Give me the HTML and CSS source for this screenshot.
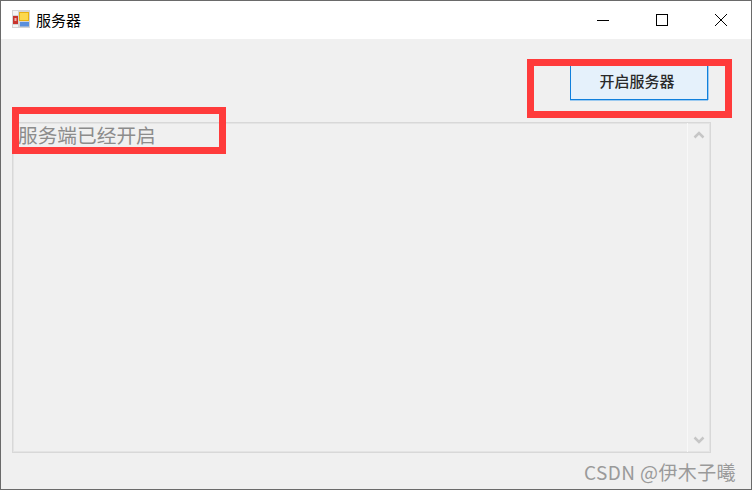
FILE: index.html
```html
<!DOCTYPE html>
<html lang="zh">
<head>
<meta charset="utf-8">
<title>服务器</title>
<link rel="stylesheet" href="styles.css">
</head>
<body>
<div class="window">
  <header class="titlebar">
    <svg class="app-icon" width="18" height="18" viewBox="0 0 18 18">
      <rect x="0" y="0" width="18" height="18" fill="#d4d4d4"/>
      <rect x="1" y="1" width="5" height="4" fill="#f4f4f4"/>
      <rect x="1" y="6" width="5" height="8" fill="#c8342c"/>
      <rect x="2.500" y="8" width="2" height="3" fill="#eeb0a8"/>
      <rect x="1" y="15" width="5" height="2" fill="#f4f4f4"/>
      <rect x="7" y="2" width="10" height="9" fill="#e8b010"/>
      <rect x="8" y="3" width="8" height="7" fill="#fcd84c"/>
      <rect x="8" y="12" width="9" height="4.500" fill="#5a8fdc"/>
    </svg>
    <span class="title">服务器</span>
    <div class="controls">
      <span class="ctl"><svg width="12" height="12" viewBox="0 0 12 12"><path d="M0 6.500H12" stroke="#000" fill="none"/></svg></span>
      <span class="ctl"><svg width="12" height="12" viewBox="0 0 12 12"><rect x="0.500" y="0.500" width="11" height="11" stroke="#000" fill="none"/></svg></span>
      <span class="ctl"><svg width="12" height="12" viewBox="0 0 12 12"><path d="M0 0L12 12M12 0L0 12" stroke="#000" stroke-width="1" fill="none"/></svg></span>
    </div>
  </header>
  <main class="client">
    <div class="toolbar"><button class="btn">开启服务器</button></div>
    <div class="textbox">
      <div class="log">服务端已经开启</div>
      <div class="scrollbar">
        <svg width="12" height="8" viewBox="0 0 12 8"><path d="M1.500 6.500L6 2L10.500 6.500" stroke="#c6c6c6" stroke-width="2.500" fill="none"/></svg>
        <svg width="12" height="8" viewBox="0 0 12 8"><path d="M1.500 1.500L6 6L10.500 1.500" stroke="#c6c6c6" stroke-width="2.500" fill="none"/></svg>
      </div>
    </div>
  </main>
  <div class="mark mark-btn"></div>
  <div class="mark mark-log"></div>
  <div class="watermark">CSDN @伊木子曦</div>
</div>
</body>
</html>
```
FILE: styles.css
```css
* { box-sizing: border-box; }
html, body { margin: 0; padding: 0; }
body { width: 752px; height: 490px; overflow: hidden; font-family: "Noto Sans CJK SC", "Liberation Sans", sans-serif; }
.window {
  position: relative;
  width: 752px;
  height: 490px;
  border: 1px solid #6a6a6a;
  background: #f0f0f0;
  display: flex;
  flex-direction: column;
}
.titlebar {
  height: 38px;
  background: #fff;
  display: flex;
  align-items: center;
  padding-left: 11px;
  flex: none;
}
.app-icon { flex: none; margin-bottom: 2px; }
.title { margin-left: 6px; font-size: 15px; line-height: 20px; color: #000; }
.controls { margin-left: auto; display: flex; }
.ctl { width: 59px; height: 38px; display: flex; align-items: center; justify-content: center; }
.ctl:last-child { width: 60px; }
.client { flex: 1; display: flex; flex-direction: column; padding: 0 40px 0 11px; }
.toolbar { display: flex; justify-content: flex-end; padding-top: 20px; height: 83px; flex: none; }
.btn {
  width: 138px;
  height: 41px;
  margin-right: 3px;
  border: 1px solid #1080dc;
  box-shadow: 0 1px 0 #9ccaf0, 1px 0 0 #9ccaf0;
  background: #e5f1fb;
  font: inherit;
  font-size: 15px;
  font-weight: 500;
  line-height: 39px;
  color: #2a2a2a;
  padding: 1px 4px 0 0;
}
.textbox {
  width: 699px;
  height: 331px;
  flex: none;
  display: flex;
  border: 1px solid #d8d8d8;
  box-shadow: inset 0 0 0 1px #e4e4e4;
  background: #f0f0f0;
}
.log { flex: 1; padding: 0 0 0 5px; margin-top: -1px; font-size: 19.700px; line-height: 26px; color: #8c8c8c; }
.scrollbar {
  width: 23px;
  border-left: 1px solid #f8f8f8;
  display: flex;
  flex-direction: column;
  justify-content: space-between;
  align-items: center;
  padding: 8px 0 8px;
}
.mark { position: absolute; border: 7px solid #ff3b3b; }
.mark-btn { left: 526px; top: 58px; width: 205px; height: 59px; }
.mark-log { left: 11px; top: 106px; width: 214px; height: 47px; }
.watermark {
  position: absolute;
  right: 15px;
  top: 459px;
  font-size: 19px;
  line-height: 24px;
  letter-spacing: 0.400px;
  color: #9a9a9a;
  white-space: nowrap;
}
```
